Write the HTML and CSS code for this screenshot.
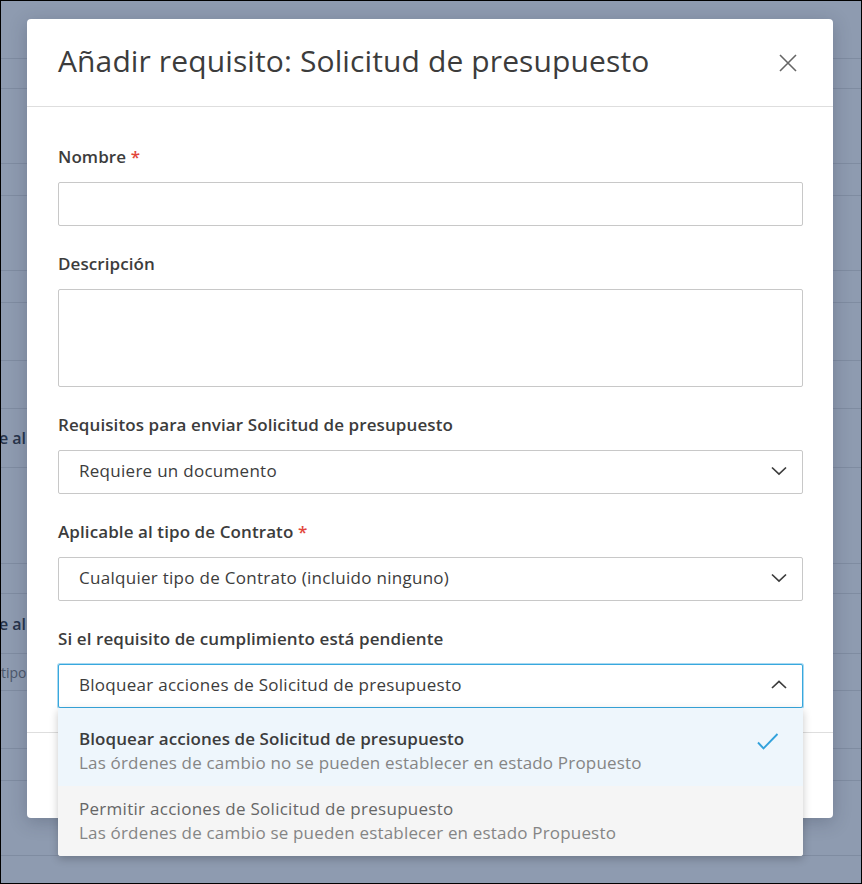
FILE: index.html
```html
<!DOCTYPE html>
<html lang="es">
<head>
<meta charset="utf-8">
<title>Añadir requisito</title>
<link rel="stylesheet" href="styles.css">
</head>
<body>
<div class="screen">
  <div class="bg-page">
    <div class="bg-row h58"></div>
    <div class="bg-row h30"></div>
    <div class="bg-row h75"></div>
    <div class="bg-row h32"></div>
    <div class="bg-row h75"></div>
    <div class="bg-row h32"></div>
    <div class="bg-row h58"></div>
    <div class="bg-row h48"></div>
    <div class="bg-row h59"><div class="bg-cell-end bg-strong">e al</div></div>
    <div class="bg-row h96"></div>
    <div class="bg-row h30"></div>
    <div class="bg-row h60"><div class="bg-cell-end bg-strong">e al</div></div>
    <div class="bg-row h37"><div class="bg-cell-start">tipo</div></div>
    <div class="bg-row h58"></div>
    <div class="bg-row h32"></div>
    <div class="bg-row h75"></div>
  </div>

  <div class="modal">
    <div class="modal-header">
      <h1 class="modal-title">Añadir requisito: Solicitud de presupuesto</h1>
      <button class="close-btn" aria-label="Cerrar">
        <svg width="18" height="18" viewBox="0 0 18 18"><path d="M1 1 L17 17 M17 1 L1 17" stroke="#666" stroke-width="1.6" fill="none"/></svg>
      </button>
    </div>

    <div class="modal-body">
      <div class="field">
        <div class="label">Nombre <span class="req">*</span></div>
        <div class="input"></div>
      </div>
      <div class="field">
        <div class="label">Descripción</div>
        <div class="input textarea"></div>
      </div>
      <div class="field">
        <div class="label">Requisitos para enviar Solicitud de presupuesto</div>
        <div class="input select">
          <span>Requiere un documento</span>
          <svg class="chev" width="16" height="16" viewBox="0 0 16 16"><path d="M1 4.5 L8 11 L15 4.5" stroke="#3c3c3c" stroke-width="1.7" fill="none"/></svg>
        </div>
      </div>
      <div class="field">
        <div class="label">Aplicable al tipo de Contrato <span class="req">*</span></div>
        <div class="input select">
          <span>Cualquier tipo de Contrato (incluido ninguno)</span>
          <svg class="chev" width="16" height="16" viewBox="0 0 16 16"><path d="M1 4.5 L8 11 L15 4.5" stroke="#3c3c3c" stroke-width="1.7" fill="none"/></svg>
        </div>
      </div>
      <div class="field last">
        <div class="label">Si el requisito de cumplimiento está pendiente</div>
        <div class="select-wrap">
          <div class="input select focused">
            <span>Bloquear acciones de Solicitud de presupuesto</span>
            <svg class="chev" width="16" height="16" viewBox="0 0 16 16"><path d="M1 11 L8 4.5 L15 11" stroke="#3c3c3c" stroke-width="1.7" fill="none"/></svg>
          </div>
          <ul class="menu">
            <li class="option selected">
              <div class="opt-text">
                <div class="opt-main">Bloquear acciones de Solicitud de presupuesto</div>
                <div class="opt-sub">Las órdenes de cambio no se pueden establecer en estado Propuesto</div>
              </div>
              <svg class="check" width="22" height="18" viewBox="0 0 22 18"><path d="M1 10.5 L6.5 16.3 L20.5 2" stroke="#33a2dc" stroke-width="1.9" fill="none"/></svg>
            </li>
            <li class="option hover">
              <div class="opt-text">
                <div class="opt-main">Permitir acciones de Solicitud de presupuesto</div>
                <div class="opt-sub">Las órdenes de cambio se pueden establecer en estado Propuesto</div>
              </div>
            </li>
          </ul>
        </div>
      </div>
    </div>

    <div class="modal-footer"></div>
  </div>
</div>
</body>
</html>
```

FILE: styles.css
```css
html, body {
  margin: 0;
  padding: 0;
}

body {
  font-family: "Open Sans", "Noto Sans", sans-serif;
  color: #3c3c3c;
}

.screen {
  position: relative;
  width: 862px;
  height: 884px;
  box-sizing: border-box;
  border: 1px solid #000;
  background: #8e9bb0;
  overflow: hidden;
}

/* background page seen through the overlay */
.bg-page {
  display: flex;
  flex-direction: column;
}

.bg-row {
  box-sizing: border-box;
  border-bottom: 1px solid #7f8ca1;
  display: flex;
  align-items: center;
}

.h30 { height: 30px; }
.h32 { height: 32px; }
.h37 { height: 37px; }
.h48 { height: 48px; }
.h58 { height: 58px; }
.h59 { height: 59px; }
.h60 { height: 60px; }
.h75 { height: 75px; }
.h96 { height: 96px; }

.bg-cell-end {
  width: 25px;
  display: flex;
  justify-content: flex-end;
  white-space: nowrap;
  font-size: 16px;
}

.bg-cell-start {
  width: 25px;
  white-space: nowrap;
  font-size: 14px;
  color: #4c586c;
}

.bg-strong {
  font-weight: 600;
  color: #27344b;
}

/* modal */
.modal {
  position: absolute;
  top: 18px;
  left: 26px;
  width: 806px;
  height: 799px;
  background: #fff;
  border-radius: 4px;
  box-shadow: 0 4px 18px rgba(30, 40, 60, 0.25);
  display: flex;
  flex-direction: column;
}

.modal-header {
  height: 88px;
  box-sizing: border-box;
  border-bottom: 1px solid #dedede;
  display: flex;
  align-items: center;
  justify-content: space-between;
  padding: 0 36px 0 31px;
  flex-shrink: 0;
}

.modal-title {
  margin: 0 0 3px 0;
  font-size: 30px;
  font-weight: 400;
  line-height: 40px;
  letter-spacing: 0.12px;
  color: #3c3c3c;
}

.close-btn {
  border: 0;
  background: none;
  padding: 0;
  width: 18px;
  height: 18px;
  display: flex;
}

.modal-body {
  padding: 40px 30px 24px 31px;
  display: flex;
  flex-direction: column;
  flex-shrink: 0;
}

.field {
  display: flex;
  flex-direction: column;
  margin-bottom: 28px;
}

.field.last {
  margin-bottom: 0;
}

.label {
  font-size: 17px;
  font-weight: 600;
  line-height: 20px;
  letter-spacing: 0.09px;
  margin-bottom: 15px;
  color: #3c3c3c;
}

.req {
  color: #e2463b;
}

.input {
  height: 44px;
  box-sizing: border-box;
  border: 1px solid #c8c8c8;
  border-radius: 2px;
  background: #fff;
}

.textarea {
  height: 98px;
}

.select {
  display: flex;
  align-items: center;
  justify-content: space-between;
  padding: 0 15px 3px 20px;
  font-size: 17px;
  line-height: 24px;
  letter-spacing: 0.28px;
  color: #3c3c3c;
}

.chev {
  display: block;
  flex-shrink: 0;
}

.select-wrap {
  position: relative;
}

.select.focused {
  border-color: #38a8de;
  box-shadow: 0 0 0 1px #a9d9f1;
}

.menu {
  position: absolute;
  top: 100%;
  left: 0;
  right: 0;
  margin: 0;
  padding: 0;
  list-style: none;
  background: #f5f5f5;
  border-radius: 0 0 3px 3px;
  box-shadow: 0 3px 8px rgba(0, 0, 0, 0.22);
  overflow: hidden;
  z-index: 2;
}

.option {
  display: flex;
  align-items: flex-start;
  justify-content: space-between;
  padding: 11px 24px 11px 21px;
  font-size: 17px;
  line-height: 24px;
}

.option.selected {
  background: #eef6fc;
  padding-top: 19px;
}

.option.selected .check {
  margin-top: 5px;
}

.option.hover {
  background: #f5f5f5;
}

.opt-main {
  color: #666;
  letter-spacing: 0.28px;
}

.option.selected .opt-main {
  font-weight: 600;
  letter-spacing: 0.07px;
  color: #3c3c3c;
}

.opt-sub {
  color: #858585;
  letter-spacing: 0.18px;
}

.check {
  display: block;
  flex-shrink: 0;
}

.modal-footer {
  flex: 1;
  border-top: 1px solid #dedede;
}
```
